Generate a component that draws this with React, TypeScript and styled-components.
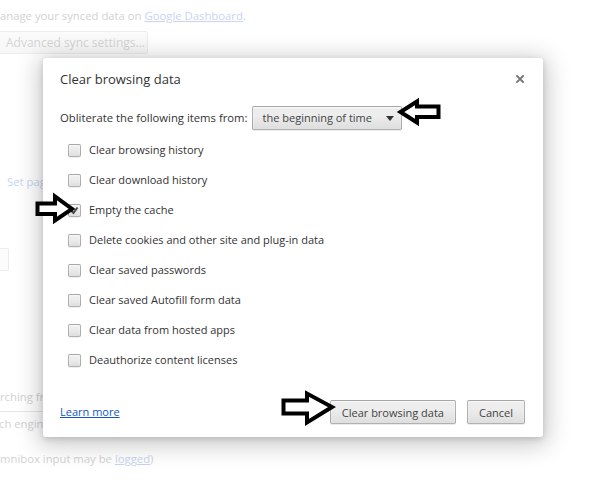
import React from "react";
import styled, { createGlobalStyle } from "styled-components";

const GlobalStyle = createGlobalStyle`
  html, body {
    margin: 0;
    padding: 0;
    width: 602px;
    height: 480px;
    overflow: hidden;
    background: #ffffff;
  }
  body {
    font-family: "Open Sans", "Noto Sans", Arial, sans-serif;
  }
  * { box-sizing: border-box; }
`;

const Screen = styled.div`
  position: relative;
  width: 602px;
  height: 480px;
  overflow: hidden;
  background: #fff;
`;

/* ---------- faded settings page behind the dialog ---------- */

const Page = styled.div`
  display: flex;
  flex-direction: column;
  align-items: flex-start;
  font-size: 11.3px;
  color: #d2d2d2;
  white-space: nowrap;
`;

const BgLine = styled.div<{ $top: number; $left?: number }>`
  margin-top: ${(p) => p.$top}px;
  margin-left: ${(p) => p.$left ?? 0}px;
  height: 18px;
  line-height: 18px;
`;

const BgLink = styled.span`
  color: #c9d4f2;
  text-decoration: underline;
`;

const BgPlainLink = styled(BgLine)`
  color: #c9d4f2;
`;

const BgButton = styled.div<{ $top: number }>`
  margin-top: ${(p) => p.$top}px;
  margin-left: -2px;
  height: 23px;
  width: 150px;
  padding-left: 7px;
  line-height: 21px;
  font-size: 12px;
  border: 1px solid #ececec;
  border-radius: 2px;
  background: linear-gradient(#fbfbfb, #f7f7f7);
  color: #d4d4d4;
`;

const BgBox = styled.div<{ $top: number }>`
  margin-top: ${(p) => p.$top}px;
  margin-left: -41px;
  width: 50px;
  height: 23px;
  border: 1px solid #ececec;
  border-radius: 2px;
  background: #fcfcfc;
`;

const BgInput = styled.div<{ $top: number }>`
  margin-top: ${(p) => p.$top}px;
  margin-left: -20px;
  width: 90px;
  height: 24px;
  padding-left: 19px;
  line-height: 23px;
  border-top: 1px solid #e6e6e6;
  color: #d2d2d2;
`;

/* ---------- dialog ---------- */

const Dialog = styled.div`
  position: absolute;
  left: 43px;
  top: 58px;
  width: 500px;
  padding: 0 18px 13px 17px;
  background: #fff;
  border-radius: 3px;
  box-shadow: 0 4px 23px 5px rgba(0, 0, 0, 0.2), 0 2px 6px rgba(0, 0, 0, 0.15);
  color: #333;
  font-size: 11px;
  display: flex;
  flex-direction: column;
`;

const Header = styled.div`
  height: 30px;
  padding-top: 12px;
  display: flex;
  align-items: center;
  justify-content: space-between;
`;

const Title = styled.div`
  font-size: 13px;
  line-height: 18px;
  color: #333;
`;

const Close = styled.div`
  width: 10px;
  height: 10px;
  display: flex;
  align-items: center;
  justify-content: center;
`;

const PeriodRow = styled.div`
  margin-top: 18px;
  height: 24px;
  display: flex;
  align-items: center;
  gap: 4px;
  line-height: 16px;
  font-size: 11.3px;
`;

const Select = styled.div`
  width: 150px;
  height: 24px;
  padding: 0 7px 0 10px;
  display: flex;
  align-items: center;
  justify-content: space-between;
  border: 1px solid rgba(0, 0, 0, 0.25);
  border-radius: 2px;
  background: linear-gradient(#ededed, #ededed 38%, #dedede);
  box-shadow: 0 1px 0 rgba(0, 0, 0, 0.08), inset 0 1px 2px rgba(255, 255, 255, 0.75);
  color: #444;
  font-size: 11px;
`;

const CheckList = styled.div`
  margin-top: 5px;
  display: flex;
  flex-direction: column;
`;

const CheckRow = styled.div`
  height: 30px;
  padding-left: 8px;
  display: flex;
  align-items: center;
  gap: 8px;
`;

const Box = styled.div`
  width: 13px;
  height: 13px;
  flex: none;
  border: 1px solid rgba(0, 0, 0, 0.25);
  border-radius: 2px;
  background: linear-gradient(#ededed, #ededed 38%, #dedede);
  box-shadow: 0 1px 0 rgba(0, 0, 0, 0.06), inset 0 1px 2px rgba(255, 255, 255, 0.75);
  display: flex;
  align-items: center;
  justify-content: center;
`;

const Label = styled.span`
  line-height: 16px;
  color: #333;
`;

const Footer = styled.div`
  margin-top: 25px;
  height: 24px;
  display: flex;
  align-items: center;
  justify-content: space-between;
`;

const LearnMore = styled.a`
  color: #15c;
  text-decoration: underline;
  cursor: pointer;
  line-height: 16px;
  margin-top: -1px;
`;

const Buttons = styled.div`
  display: flex;
  gap: 11px;
`;

const Button = styled.div`
  height: 24px;
  padding: 0 11px;
  display: flex;
  align-items: center;
  border: 1px solid rgba(0, 0, 0, 0.25);
  border-radius: 2px;
  background: linear-gradient(#ededed, #ededed 38%, #dedede);
  box-shadow: 0 1px 0 rgba(0, 0, 0, 0.08), inset 0 1px 2px rgba(255, 255, 255, 0.75);
  color: #444;
  font-size: 11px;
`;

/* ---------- annotation arrows (drawn over the screenshot) ---------- */

const ArrowSvg = styled.svg<{ $x: number; $y: number }>`
  position: absolute;
  left: ${(p) => p.$x}px;
  top: ${(p) => p.$y}px;
  overflow: visible;
`;

const arrows = [
  // left-pointing arrow next to the select
  { x: 398, y: 99, w: 44, h: 26, points: "2.5,13 19,2.5 19,7.5 40.5,7.5 40.5,18 19,18 19,23.5" },
  // right-pointing arrow at "Empty the cache"
  { x: 35, y: 194, w: 40, h: 29, points: "2.5,9.5 20,9.5 20,2.5 37,15 20,26.5 20,20 2.5,20" },
  // right-pointing arrow at the "Clear browsing data" button
  { x: 281, y: 391, w: 54, h: 34, points: "2.5,9.5 26,9.5 26,2.5 51,16 26,31.5 26,22.5 2.5,22.5" },
];

const items: { label: string; checked?: boolean }[] = [
  { label: "Clear browsing history" },
  { label: "Clear download history" },
  { label: "Empty the cache", checked: true },
  { label: "Delete cookies and other site and plug-in data" },
  { label: "Clear saved passwords" },
  { label: "Clear saved Autofill form data" },
  { label: "Clear data from hosted apps" },
  { label: "Deauthorize content licenses" },
];

export default function App() {
  return (
    <Screen>
      <GlobalStyle />
      <Page>
        <BgLine $top={7}>
          anage your synced data on <BgLink>Google Dashboard</BgLink>.
        </BgLine>
        <BgButton $top={6}>Advanced sync settings...</BgButton>
        <BgPlainLink $top={119} $left={7}>
          Set pages
        </BgPlainLink>
        <BgBox $top={57} />
        <BgLine $top={117}>rching from the omnibox.</BgLine>
        <BgInput $top={5}>ch engine</BgInput>
        <BgLine $top={15}>
          mnibox input may be <BgLink>logged</BgLink>)
        </BgLine>
      </Page>

      <Dialog>
        <Header>
          <Title>Clear browsing data</Title>
          <Close>
            <svg width="8" height="8" viewBox="0 0 8 8">
              <path d="M1 1 L7 7 M7 1 L1 7" stroke="#777" strokeWidth="1.9" strokeLinecap="square" />
            </svg>
          </Close>
        </Header>
        <PeriodRow>
          <span>Obliterate the following items from:</span>
          <Select>
            <span>the beginning of time</span>
            <svg width="8" height="5" viewBox="0 0 8 5">
              <path d="M0 0 H8 L4 5 Z" fill="#333" />
            </svg>
          </Select>
        </PeriodRow>
        <CheckList>
          {items.map((it) => (
            <CheckRow key={it.label}>
              <Box>
                {it.checked && (
                  <svg width="9" height="9" viewBox="0 0 9 9">
                    <path d="M1.5 5 L3.5 7 L7.5 1.5" stroke="#444" strokeWidth="1.8" fill="none" />
                  </svg>
                )}
              </Box>
              <Label>{it.label}</Label>
            </CheckRow>
          ))}
        </CheckList>
        <Footer>
          <LearnMore>Learn more</LearnMore>
          <Buttons>
            <Button>Clear browsing data</Button>
            <Button>Cancel</Button>
          </Buttons>
        </Footer>
      </Dialog>

      {arrows.map((a, i) => (
        <ArrowSvg key={i} $x={a.x} $y={a.y} width={a.w} height={a.h} viewBox={`0 0 ${a.w} ${a.h}`}>
          <polygon points={a.points} fill="#fff" stroke="#000" strokeWidth="4" strokeLinejoin="miter" />
        </ArrowSvg>
      ))}
    </Screen>
  );
}
